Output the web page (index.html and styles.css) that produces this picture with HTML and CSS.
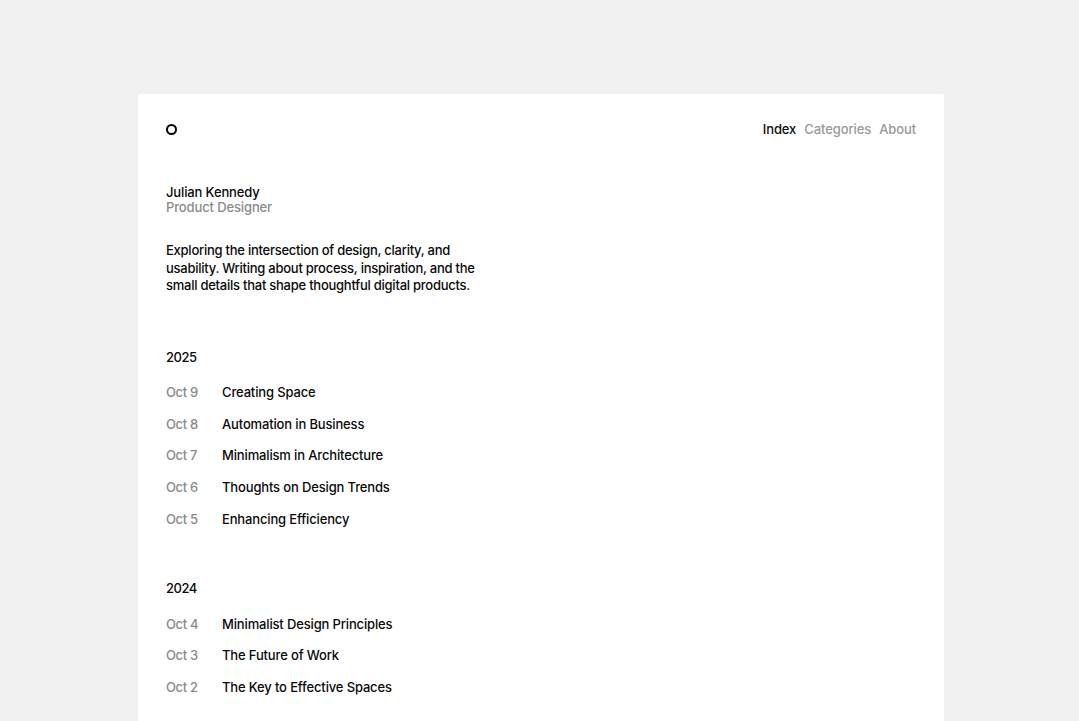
FILE: index.html
```html
<!DOCTYPE html>
<html lang="en">
<head>
<meta charset="utf-8">
<title>Julian Kennedy</title>
<link rel="stylesheet" href="styles.css">
</head>
<body>
<main class="card">
  <header class="top">
    <span class="logo"></span>
    <nav class="nav">
      <a class="nav-link active">Index</a>
      <a class="nav-link">Categories</a>
      <a class="nav-link">About</a>
    </nav>
  </header>
  <section class="who">
    <div class="name">Julian Kennedy</div>
    <div class="role">Product Designer</div>
  </section>
  <p class="intro">Exploring the intersection of design, clarity, and usability. Writing about process, inspiration, and the small details that shape thoughtful digital products.</p>
  <section class="year">
    <h2 class="year-title">2025</h2>
    <ul class="posts">
      <li class="post"><span class="date">Oct 9</span><span class="title">Creating Space</span></li>
      <li class="post"><span class="date">Oct 8</span><span class="title">Automation in Business</span></li>
      <li class="post"><span class="date">Oct 7</span><span class="title">Minimalism in Architecture</span></li>
      <li class="post"><span class="date">Oct 6</span><span class="title">Thoughts on Design Trends</span></li>
      <li class="post"><span class="date">Oct 5</span><span class="title">Enhancing Efficiency</span></li>
    </ul>
  </section>
  <section class="year">
    <h2 class="year-title">2024</h2>
    <ul class="posts">
      <li class="post"><span class="date">Oct 4</span><span class="title">Minimalist Design Principles</span></li>
      <li class="post"><span class="date">Oct 3</span><span class="title">The Future of Work</span></li>
      <li class="post"><span class="date">Oct 2</span><span class="title">The Key to Effective Spaces</span></li>
    </ul>
  </section>
</main>
</body>
</html>
```
FILE: styles.css
```css
html, body { margin: 0; height: 100%; overflow: hidden; }
body { background: #f0f0f0; font-family: Inter, "Liberation Sans", sans-serif; font-size: 13px; font-weight: 500; letter-spacing: -0.15px; color: #0a0a0a; padding: 94px 135px 0 138px; box-sizing: border-box; }
.card { background: #fff; border-radius: 2px; padding: 24px 28px 40px; height: 800px; box-sizing: border-box; }
.top { display: flex; justify-content: space-between; align-items: center; height: 22px; }
.logo { width: 11px; height: 11px; border: 2px solid #000; border-radius: 50%; box-sizing: border-box; }
.nav { display: flex; gap: 8px; }
.nav-link { color: #999; letter-spacing: -0.1px; }
.nav-link.active { color: #0a0a0a; }
.who { margin-top: 45px; line-height: 15px; letter-spacing: -0.13px; }
.role { color: #8a8a8a; }
.intro { margin: 27px 0 0; width: 320px; line-height: 17.5px; letter-spacing: -0.25px; }
.year { margin-top: 52px; }
.year-title { margin: 0; font-size: 13px; font-weight: 500; line-height: 20px; letter-spacing: -0.5px; }
.posts { list-style: none; margin: 9.5px 0 0; padding: 0; display: flex; flex-direction: column; }
.post { display: flex; height: 31.7px; align-items: center; }
.date { width: 56px; color: #8a8a8a; letter-spacing: -0.35px; }
.year + .year { margin-top: 44px; }
```
